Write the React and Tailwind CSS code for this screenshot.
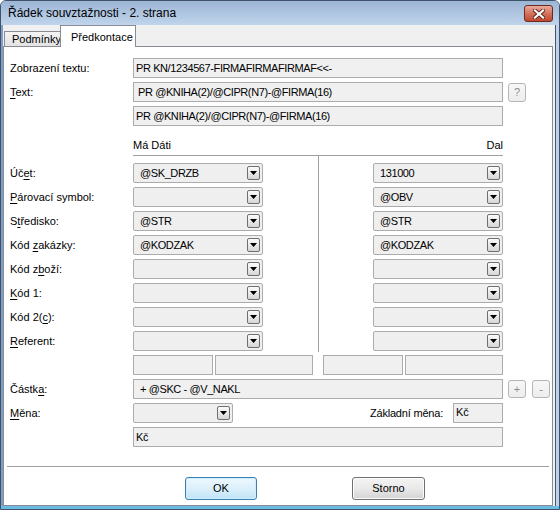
import React from "react";

const U = ({ children }) => (
  <span className="underline decoration-1 underline-offset-[2px]">{children}</span>
);

function Arrow() {
  return (
    <svg width="7" height="4" viewBox="0 0 7 4">
      <path d="M0 0H7L3.5 4Z" fill="#000" />
    </svg>
  );
}

function DropBtn() {
  return (
    <div className="w-[13px] h-[14px] shrink-0 rounded-[2px] border border-[#6f6f6f] bg-gradient-to-b from-[#fbfbfb] to-[#d6d6d6] flex items-center justify-center">
      <Arrow />
    </div>
  );
}

function Combo({ value, className = "" }) {
  return (
    <div
      className={`h-[20px] shrink-0 border border-[#acacac] rounded-[2px] bg-[#efefef] flex items-center pr-[2px] ${className}`}
    >
      <span className="flex-1 pl-[6px] whitespace-nowrap overflow-hidden tracking-[-0.4px]">{value}</span>
      <DropBtn />
    </div>
  );
}

function Box({ children, className = "" }) {
  return (
    <div
      className={`h-[20px] shrink-0 border border-[#acacac] bg-[#f0f0f0] flex items-center whitespace-nowrap tracking-[-0.4px] ${className}`}
    >
      {children}
    </div>
  );
}

function SmallBtn({ children, className = "" }) {
  return (
    <div
      className={`w-[18px] shrink-0 rounded-[3px] border border-[#b5b5b5] bg-gradient-to-b from-[#f7f7f7] to-[#ededed] text-[#8c8c8c] flex items-center justify-center leading-none ${className}`}
    >
      {children}
    </div>
  );
}

function Label({ children }) {
  return (
    <div className="h-[20px] flex items-center whitespace-nowrap">
      <span>{children}</span>
    </div>
  );
}

const leftLabels = [
  <>Úč<U>e</U>t:</>,
  <><U>P</U>árovací symbol:</>,
  <>S<U>t</U>ředisko:</>,
  <>Kód <U>z</U>akázky:</>,
  <>Kód z<U>b</U>oží:</>,
  <><U>K</U>ód 1:</>,
  <>Kód 2(<U>c</U>):</>,
  <><U>R</U>eferent:</>,
];
const leftVals = ["@SK_DRZB", "", "@STR", "@KODZAK", "", "", "", ""];
const rightVals = ["131000", "@OBV", "@STR", "@KODZAK", "", "", "", ""];

export default function App() {
  return (
    <div className="w-[560px] h-[510px] flex flex-col overflow-hidden rounded-t-[6px] border border-[#3f526a] bg-[#bcd1ea] text-[11px] text-black font-['Liberation_Sans',Arial,sans-serif]">
      {/* Title bar */}
      <div className="h-[24px] shrink-0 flex items-start bg-gradient-to-b from-[#9cb6d5] to-[#c0d4eb]">
        <div className="flex-1 h-[24px] flex items-center pl-[7px] text-[12px]">
          Řádek souvztažnosti - 2. strana
        </div>
        <div className="mt-[4px] mr-[6px] w-[29px] h-[17px] rounded-[3px] border border-[#6e2a1e] bg-gradient-to-b from-[#e9a99b] via-[#d3735e] to-[#c0452b] flex items-center justify-center">
          <svg width="12" height="10" viewBox="0 0 12 10">
            <path
              d="M2 1.5L10 8.5M10 1.5L2 8.5"
              stroke="#5a2219"
              strokeWidth="4"
              strokeLinecap="square"
            />
            <path
              d="M2 1.5L10 8.5M10 1.5L2 8.5"
              stroke="#ffffff"
              strokeWidth="2.2"
              strokeLinecap="square"
            />
          </svg>
        </div>
      </div>

      {/* Body */}
      <div className="flex-1 flex">
        <div className="w-[2px] bg-[#7f9fc6]" />
        <div className="w-[552px] flex flex-col bg-[#f0f0f0]">
          {/* Tabs */}
          <div className="h-[21px] shrink-0 flex items-end pl-[1px]">
            <div className="w-[56px] h-[15px] border-l border-t border-[#898c95] bg-gradient-to-b from-[#f4f4f4] to-[#e3e3e3] flex items-center pl-[7px]">
              Podmínky
            </div>
            <div className="relative z-10 -mb-[1px] w-[76px] h-[22px] border border-b-0 border-[#898c95] bg-white flex items-start pt-[3px] pl-[10px]">
              Předkontace
            </div>
          </div>

          {/* Panel */}
          <div className="w-[550px] flex-1 flex flex-col border border-[#898c95] bg-white">
            <div className="flex flex-col pl-[6px] pt-[11px]">
              {/* Zobrazení textu */}
              <div className="flex">
                <div className="w-[123px]">
                  <Label>Zobrazení textu:</Label>
                </div>
                <Box className="w-[370px] pl-[2px]">PR KN/1234567-FIRMAFIRMAFIRMAF&lt;&lt;-</Box>
              </div>
              {/* Text */}
              <div className="flex mt-[4px]">
                <div className="w-[123px]">
                  <Label>
                    <U>T</U>ext:
                  </Label>
                </div>
                <Box className="w-[370px] pl-[4px]">PR @KNIHA(2)/@CIPR(N7)-@FIRMA(16)</Box>
                <SmallBtn className="ml-[5px] h-[19px] mt-[1px]">?</SmallBtn>
              </div>
              <div className="flex mt-[4px]">
                <div className="w-[123px]" />
                <Box className="w-[370px] pl-[2px]">PR @KNIHA(2)/@CIPR(N7)-@FIRMA(16)</Box>
              </div>

              {/* Headings */}
              <div className="ml-[123px] w-[370px] mt-[12px] h-[18px] border-b border-[#a0a0a0] flex justify-between items-start leading-[14px]">
                <span>Má Dáti</span>
                <span>Dal</span>
              </div>

              {/* Rows */}
              <div className="flex">
                <div className="w-[123px] flex flex-col gap-[4px] pt-[7px]">
                  {leftLabels.map((l, i) => (
                    <Label key={i}>{l}</Label>
                  ))}
                </div>
                <div className="w-[130px] flex flex-col gap-[4px] pt-[7px] pb-[1px]">
                  {leftVals.map((v, i) => (
                    <Combo key={i} value={v} className="w-[130px]" />
                  ))}
                </div>
                <div className="w-[55px]" />
                <div className="w-px bg-[#a0a0a0]" />
                <div className="w-[54px]" />
                <div className="w-[130px] flex flex-col gap-[4px] pt-[7px]">
                  {rightVals.map((v, i) => (
                    <Combo key={i} value={v} className="w-[130px]" />
                  ))}
                </div>
              </div>

              {/* Small boxes */}
              <div className="flex mt-[3px] pl-[123px]">
                <Box className="w-[80px]" />
                <Box className="w-[98px] ml-[2px]" />
                <Box className="w-[80px] ml-[10px]" />
                <Box className="w-[98px] ml-[2px]" />
              </div>

              {/* Částka */}
              <div className="flex mt-[4px] items-center">
                <div className="w-[123px]">
                  <Label>
                    Částk<U>a</U>:
                  </Label>
                </div>
                <Box className="w-[370px] pl-[6px]">+ @SKC - @V_NAKL</Box>
                <SmallBtn className="ml-[5px] h-[18px]">+</SmallBtn>
                <SmallBtn className="ml-[6px] h-[18px]">-</SmallBtn>
              </div>

              {/* Měna */}
              <div className="flex mt-[4px]">
                <div className="w-[123px]">
                  <Label>
                    <U>M</U>ěna:
                  </Label>
                </div>
                <Combo value="" className="w-[100px]" />
                <div className="w-[220px] h-[20px] flex items-center justify-end pr-[10px] whitespace-nowrap tracking-[-0.2px]">
                  Základní měna:
                </div>
                <div className="w-[50px] h-[20px] border border-[#acacac] bg-[#f0f0f0] pl-[2px] pt-[1px] leading-[14px]">
                  Kč
                </div>
              </div>

              {/* Kč */}
              <div className="flex mt-[4px]">
                <div className="w-[123px]" />
                <Box className="w-[370px] pl-[2px]">Kč</Box>
              </div>
            </div>

            {/* Separator */}
            <div className="mx-[3px] mt-[19px] h-px bg-[#a0a0a0]" />

            {/* Buttons */}
            <div className="flex mt-[10px] pl-[181px]">
              <div className="w-[72px] h-[23px] rounded-[3px] border border-[#3c7fb1] bg-gradient-to-b from-[#edf8fe] via-[#dcf0fb] to-[#bfe3f7] shadow-[inset_0_0_0_1px_#cdeefd] flex items-center justify-center">
                OK
              </div>
              <div className="ml-[95px] w-[73px] h-[23px] rounded-[3px] border border-[#707070] bg-gradient-to-b from-[#f4f4f4] via-[#e9e9e9] to-[#d3d3d3] shadow-[inset_0_0_0_1px_#fbfbfb] flex items-center justify-center">
                Storno
              </div>
            </div>
          </div>
        </div>
        <div className="w-px bg-[#43566e]" />
        <div className="w-[3px] bg-[#bed3eb]" />
      </div>
      <div className="h-[3px] shrink-0 bg-[#6cbbe5]" />
    </div>
  );
}
